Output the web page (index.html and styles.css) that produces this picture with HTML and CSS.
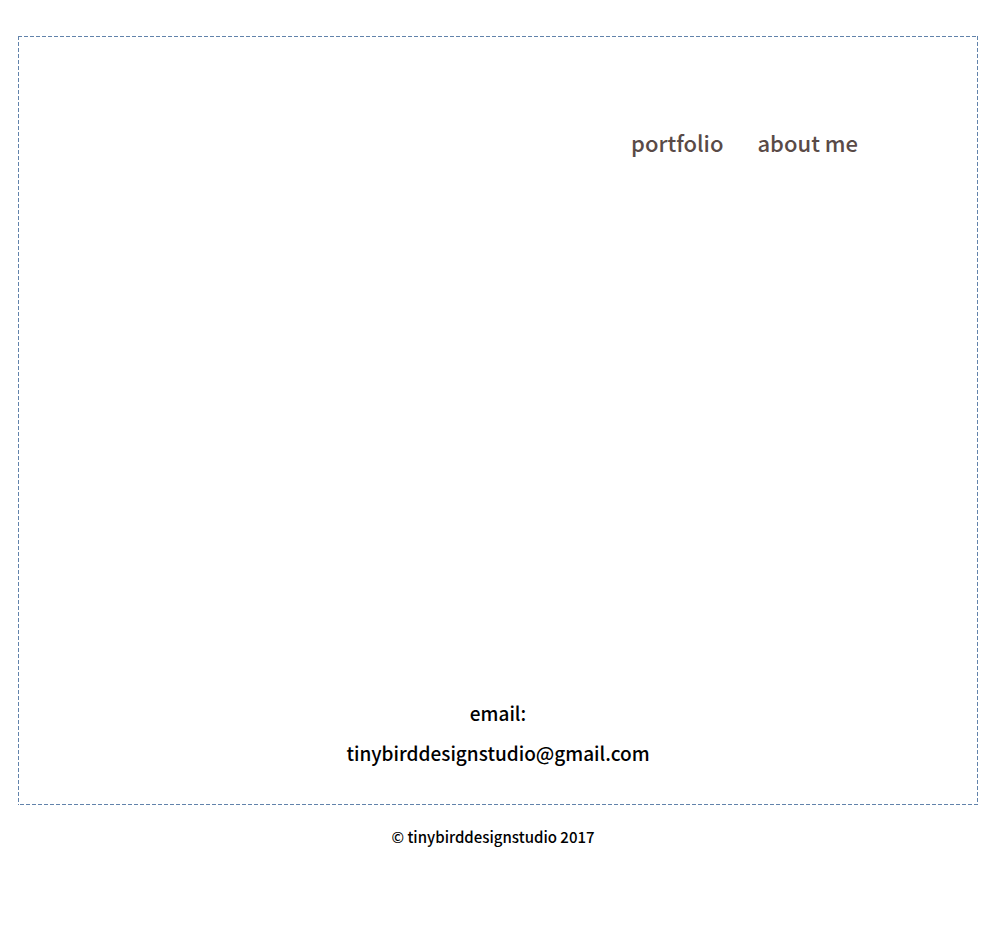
FILE: index.html
```html
<!DOCTYPE html>
<html lang="en">
<head>
<meta charset="utf-8">
<meta name="viewport" content="width=device-width, initial-scale=1">
<title>tinybirddesignstudio</title>
<link rel="stylesheet" href="styles.css">
</head>
<body>
<div class="frame">
  <nav class="nav">
    <a href="#portfolio">portfolio</a>
    <a href="#about">about me</a>
  </nav>
  <main class="contact">
    <div>email:</div>
    <a href="mailto:tinybirddesignstudio@gmail.com">tinybirddesignstudio@gmail.com</a>
  </main>
</div>
<footer class="footer">© tinybirddesignstudio 2017</footer>
</body>
</html>
```

FILE: styles.css
```css
* {
  box-sizing: border-box;
}

body {
  margin: 0;
  padding: 36px 16px 0 18px;
  background: #fff;
  color: #000;
  font-family: "Noto Sans CJK JP", "Noto Sans", sans-serif;
  font-weight: 500;
}

a {
  color: inherit;
  text-decoration: none;
}

/* Dashed outline: 4px dashes with 2px gaps on each edge */
.frame {
  --dash: #6283ab 0 4px, transparent 4px 6px;
  display: flex;
  flex-direction: column;
  justify-content: space-between;
  gap: 32px;
  min-height: 769px;
  padding: 86px 0 32px;
  background:
    repeating-linear-gradient(to right, var(--dash)) top / 100% 1px no-repeat,
    repeating-linear-gradient(to left, var(--dash)) bottom / 100% 1px no-repeat,
    repeating-linear-gradient(to bottom, var(--dash)) left / 1px 100% no-repeat,
    repeating-linear-gradient(to bottom, var(--dash)) right / 1px 100% no-repeat;
}

.nav {
  display: flex;
  justify-content: flex-end;
  gap: 34px;
  padding-right: 120px;
  color: #594a47;
  font-size: 22px;
  line-height: 40px;
}

.contact {
  text-align: center;
  font-size: 19px;
  line-height: 40px;
}

.footer {
  padding: 20px 10px 0 0;
  text-align: center;
  font-size: 15px;
  line-height: 24px;
}
```
